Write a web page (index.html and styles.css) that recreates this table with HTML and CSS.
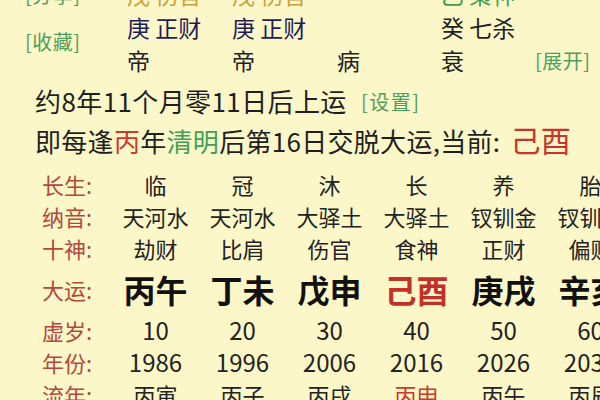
FILE: index.html
```html
<!DOCTYPE html>
<html lang="zh-CN">
<head>
<meta charset="utf-8">
<link rel="stylesheet" href="styles.css">
</head>
<body>
<div class="page">
  <div class="pillars">
    <div class="link side">[分享]</div>
    <div class="cell gold">戊 伤官</div>
    <div class="cell gold">戊 伤官</div>
    <div class="cell"></div>
    <div class="cell green">乙 枭神</div>
    <div class="cell"></div>

    <div class="link side keep">[收藏]</div>
    <div class="cell navy">庚 正财</div>
    <div class="cell navy">庚 正财</div>
    <div class="cell"></div>
    <div class="cell dark">癸 七杀</div>
    <div class="cell"></div>

    <div class="cell dark">帝</div>
    <div class="cell dark">帝</div>
    <div class="cell dark">病</div>
    <div class="cell dark">衰</div>
    <div class="link open">[展开]</div>
  </div>

  <div class="info">
    <p class="line l1">约8年11个月零11日后上运 <span class="link small">[设置]</span></p>
    <p class="line l2">即每逢<span class="red">丙</span>年<span class="greent">清明</span>后第16日交脱大运,当前: <span class="cur">己酉</span></p>
  </div>

  <div class="table">
    <div class="lab">长生:</div>
    <div class="v">临</div><div class="v">冠</div><div class="v">沐</div><div class="v">长</div><div class="v">养</div><div class="v">胎</div>

    <div class="lab">纳音:</div>
    <div class="v">天河水</div><div class="v">天河水</div><div class="v">大驿土</div><div class="v">大驿土</div><div class="v">钗钏金</div><div class="v">钗钏金</div>

    <div class="lab">十神:</div>
    <div class="v">劫财</div><div class="v">比肩</div><div class="v">伤官</div><div class="v">食神</div><div class="v">正财</div><div class="v">偏财</div>

    <div class="lab big-row">大运:</div>
    <div class="v dy">丙午</div><div class="v dy">丁未</div><div class="v dy">戊申</div><div class="v dy red-dy">己酉</div><div class="v dy">庚戌</div><div class="v dy">辛亥</div>

    <div class="lab">虚岁:</div>
    <div class="v num">10</div><div class="v num">20</div><div class="v num">30</div><div class="v num">40</div><div class="v num">50</div><div class="v num">60</div>

    <div class="lab">年份:</div>
    <div class="v num">1986</div><div class="v num">1996</div><div class="v num">2006</div><div class="v num">2016</div><div class="v num">2026</div><div class="v num">2036</div>

    <div class="lab">流年:</div>
    <div class="v">丙寅</div><div class="v">丙子</div><div class="v">丙戌</div><div class="v red-ln">丙申</div><div class="v">丙午</div><div class="v">丙辰</div>
  </div>
</div>
</body>
</html>
```

FILE: styles.css
```css
html, body {
  margin: 0;
  padding: 0;
  background: #fcf7c9;
}
body {
  width: 600px;
  height: 400px;
  overflow: hidden;
  font-family: "Noto Sans CJK SC", "Noto Sans", sans-serif;
  color: #1f1f1f;
}
.page {
  width: 600px;
}
.pillars {
  display: grid;
  grid-template-columns: 127px 105px 105px 104px 94px 66px;
  grid-template-rows: 33px 33px 33px;
  margin-top: -22px;
  align-items: center;
  font-size: 23px;
  line-height: 1;
}
.cell {
  white-space: nowrap;
}
.link {
  color: #4f9e5c;
  font-size: 20px;
  letter-spacing: 0.5px;
}
.side {
  padding-left: 25px;
}
.keep {
  grid-row: span 2;
  align-self: center;
  margin-top: -4px;
}
.open {
  white-space: nowrap;
}
.gold { color: #c8a23c; }
.green { color: #3f9a52; }
.navy { color: #1c1d58; }
.dark { color: #222222; }

.info {
  margin-top: 4px;
  padding-left: 35px;
}
.line {
  margin: 0;
  height: 39px;
  line-height: 39px;
  white-space: nowrap;
}
.l1 {
  font-size: 26px;
  letter-spacing: 0.4px;
}
.l2 {
  font-size: 26px;
  letter-spacing: 0.3px;
}
.small {
  font-size: 20px;
  letter-spacing: 1.5px;
  vertical-align: 2px;
  margin-left: 8px;
}
.red { color: #c8392e; }
.greent { color: #3fa056; }
.cur {
  color: #c8342a;
  font-size: 30px;
  margin-left: 4px;
}

.table {
  margin-top: 9px;
  margin-left: 42px;
  display: grid;
  grid-template-columns: 70px repeat(6, 87px);
  grid-template-rows: 32px 32px 32px 50px 32px 32px 32px;
  align-items: center;
  line-height: 1;
}
.lab {
  color: #b3493d;
  font-size: 22px;
  white-space: nowrap;
}
.v {
  text-align: center;
  font-size: 22px;
  white-space: nowrap;
  color: #232323;
}
.dy {
  font-size: 32px;
  font-weight: 700;
  color: #111111;
}
.red-dy { color: #c3302a; }
.num { font-size: 24px; }
.red-ln { color: #c8392e; }
```
